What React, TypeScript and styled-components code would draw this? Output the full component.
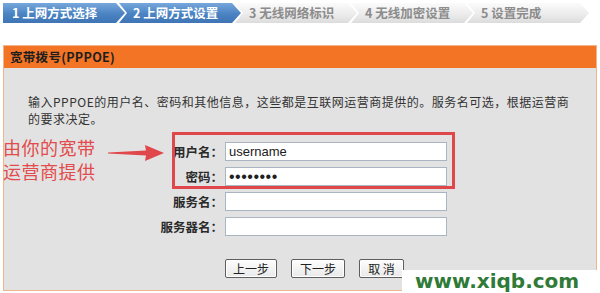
import React from "react";
import styled, { createGlobalStyle } from "styled-components";

const Global = createGlobalStyle`
  html, body { margin: 0; padding: 0; background: #ffffff; }
  body { font-family: "Noto Sans CJK SC", "Liberation Sans", sans-serif; width: 600px; height: 293px; overflow: hidden; position: relative; }
`;

const Page = styled.div`
  padding: 3px 3px 0 3px;
  width: 594px;
`;

const StepBar = styled.div`
  display: flex;
  height: 20px;
`;

const Step = styled.div<{ $active: boolean; $first: boolean }>`
  width: 122px;
  height: 20px;
  margin-left: ${(p) => (p.$first ? "0" : "-6px")};
  padding-left: ${(p) => (p.$first ? "9px" : "14px")};
  box-sizing: border-box;
  font-size: 12.5px;
  font-weight: bold;
  line-height: 20px;
  white-space: nowrap;
  color: ${(p) => (p.$active ? "#ffffff" : "#8c8c8c")};
  background: ${(p) =>
    p.$active
      ? "linear-gradient(#77a8dc, #4a82c2 55%, #3f75b5)"
      : "linear-gradient(#fbfbfb, #ececec 55%, #dcdcdc)"};
  clip-path: ${(p) =>
    p.$first
      ? "polygon(0 0, calc(100% - 9px) 0, 100% 50%, calc(100% - 9px) 100%, 0 100%)"
      : "polygon(0 0, calc(100% - 9px) 0, 100% 50%, calc(100% - 9px) 100%, 0 100%, 8px 50%)"};
`;

const Panel = styled.div`
  margin-top: 22px;
  border: 1px solid #f2b48a;
  position: relative;
`;

const Header = styled.div`
  height: 22px;
  background: #f27424;
  font-size: 12.5px;
  font-weight: bold;
  color: #1e1e1e;
  line-height: 22px;
  padding-left: 6px;
  letter-spacing: 0.3px;
`;

const Body = styled.div`
  background: #e2e2e2;
  padding: 25px 0 12px 0;
  position: relative;
`;

const Description = styled.p`
  margin: 0 0 0 24px;
  font-size: 12px;
  line-height: 17px;
  color: #333333;
  letter-spacing: 0.5px;
`;

const FormGrid = styled.div`
  display: grid;
  grid-template-columns: 219px 222px;
  column-gap: 2px;
  row-gap: 6px;
  margin-top: 15px;
`;

const Label = styled.label`
  text-align: right;
  font-size: 12.5px;
  font-weight: bold;
  color: #2a2a2a;
  line-height: 19px;
  height: 19px;
`;

const Field = styled.input<{ $secret?: boolean }>`
  box-sizing: border-box;
  height: 19px;
  width: 222px;
  margin: 0;
  padding: 0 3px;
  border: 1px solid #a9b5c1;
  background: #ffffff;
  font-family: "Liberation Sans", Arial, sans-serif;
  font-size: ${(p) => (p.$secret ? "16px" : "13px")};
  letter-spacing: ${(p) => (p.$secret ? "0.5px" : "0")};
  color: #202020;
  outline: none;
`;

const Buttons = styled.div`
  grid-column: 2;
  display: flex;
  gap: 14px;
  margin-top: 17px;
`;

const Button = styled.button<{ $w: number }>`
  width: ${(p) => p.$w}px;
  height: 19px;
  padding: 0;
  margin: 0;
  border: 1px solid #5e5e5e;
  border-radius: 2px;
  background: linear-gradient(#fdfdfd, #e9e9e9);
  font-family: "Noto Sans CJK SC", sans-serif;
  font-size: 12px;
  line-height: 17px;
  color: #222222;
  box-shadow: inset 0 0 0 1px #ffffff;
`;

const Highlight = styled.div`
  position: absolute;
  left: 168px;
  top: 64px;
  width: 283px;
  height: 57px;
  box-sizing: border-box;
  border: 3px solid #e0474a;
  pointer-events: none;
`;

const Note = styled.div`
  position: absolute;
  left: -1px;
  top: 67px;
  font-size: 18px;
  line-height: 24px;
  letter-spacing: 0.5px;
  color: #e24b4c;
`;

const Arrow = styled.svg`
  position: absolute;
  left: 102px;
  top: 76px;
`;

const Watermark = styled.div`
  position: absolute;
  left: 402px;
  top: 270px;
  width: 198px;
  height: 23px;
  background: #ffffff;
  font-family: "DejaVu Sans", sans-serif;
  font-weight: bold;
  font-size: 20px;
  line-height: 23px;
  color: #2f7a37;
  padding-left: 13px;
  box-sizing: border-box;
`;

const steps = ["1 上网方式选择", "2 上网方式设置", "3 无线网络标识", "4 无线加密设置", "5 设置完成"];

export default function App() {
  return (
    <>
      <Global />
      <Page>
        <StepBar>
          {steps.map((s, i) => (
            <Step key={s} $active={i < 2} $first={i === 0}>
              {s}
            </Step>
          ))}
        </StepBar>
        <Panel>
          <Header>宽带拨号(PPPOE)</Header>
          <Body>
            <Description>
              输入PPPOE的用户名、密码和其他信息，这些都是互联网运营商提供的。服务名可选，根据运营商
              <br />
              的要求决定。
            </Description>
            <FormGrid>
              <Label>用户名：</Label>
              <Field type="text" defaultValue="username" readOnly />
              <Label>密码：</Label>
              <Field type="password" $secret defaultValue="12345678" readOnly />
              <Label>服务名：</Label>
              <Field type="text" readOnly />
              <Label>服务器名：</Label>
              <Field type="text" readOnly />
              <Buttons>
                <Button $w={52}>上一步</Button>
                <Button $w={54}>下一步</Button>
                <Button $w={45}>取 消</Button>
              </Buttons>
            </FormGrid>
            <Highlight />
            <Note>
              由你的宽带
              <br />
              运营商提供
            </Note>
            <Arrow width="60" height="18" viewBox="0 0 60 18">
              <polygon points="2,8.5 40,6.5 39,1 58,9 39,17 40,11.5 2,9.5" fill="#e0474a" />
            </Arrow>
          </Body>
        </Panel>
      </Page>
      <Watermark>www.xiqb.com</Watermark>
    </>
  );
}
